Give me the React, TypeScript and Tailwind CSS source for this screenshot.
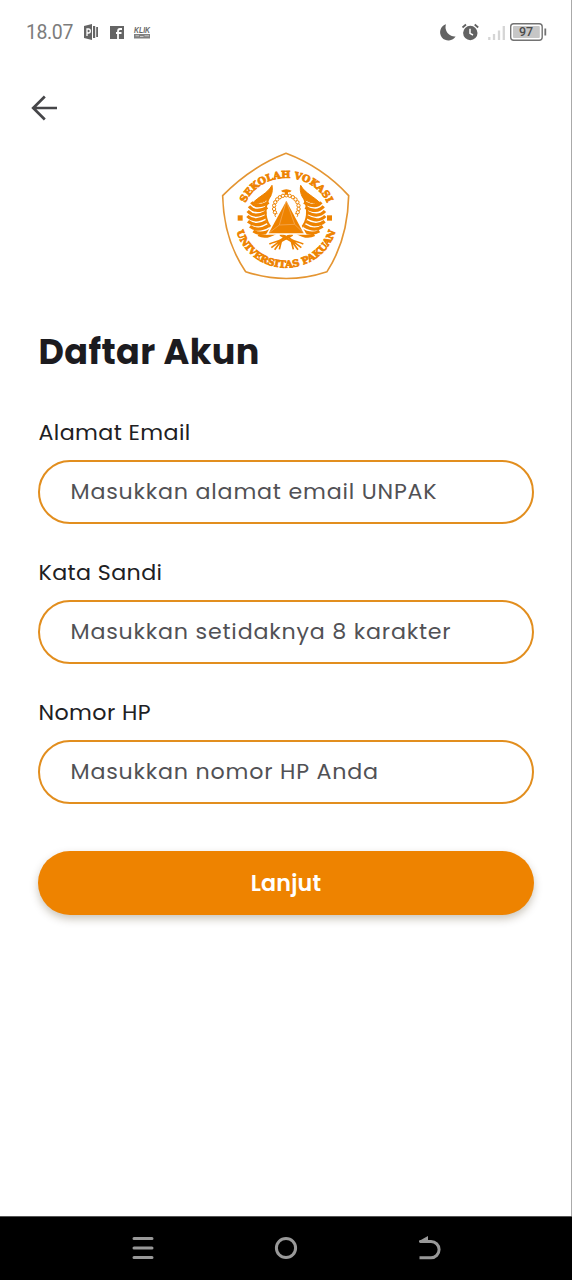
import React from "react";

const ORANGE = "#ee8300";

const FEATHERS = [
  "M124 172 Q140 192 176 172",
  "M117 184 Q136 207 172 187",
  "M113 198 Q134 221 168 201",
  "M112 213 Q134 235 167 215",
  "M114 229 Q138 249 170 229",
  "M120 244 Q144 262 176 242",
  "M130 258 Q154 273 186 253",
  "M145 269 Q168 281 198 262",
];

const BEADS = Array.from({ length: 17 }, (_, i) => {
  const angle = ((-218 + i * 16) * Math.PI) / 180;
  return { x: 229 + 37 * Math.cos(angle), y: 188 + 37 * Math.sin(angle) };
});

function Wing() {
  return (
    <g fill="none" stroke={ORANGE}>
      {FEATHERS.map((d) => (
        <path key={d} d={d} strokeWidth="9.5" />
      ))}
      <path d="M186 121 C172 146 146 154 126 176 C156 178 194 164 186 121Z" fill={ORANGE} strokeWidth="3" />
      <path d="M182 150 C163 178 162 218 178 241 C190 259 206 262 226 274 L234 282" strokeWidth="6" />
      <path d="M226 272 C214 290 202 287 178 297 M222 280 C206 291 198 297 184 308 M216 284 L194 314 M214 288 L208 313" strokeWidth="5" />
      <path d="M210 270 L246 290" strokeWidth="5" />
    </g>
  );
}

function Logo() {
  return (
    <svg viewBox="0 0 450 426" className="h-[142px] w-[150px]" role="img" aria-label="Sekolah Vokasi Universitas Pakuan">
      <defs>
        <path id="arc-top" d="M97 218 A132 119 0 0 1 361 218" />
        <path id="arc-bottom" d="M74 218 A154 150 0 0 0 382 218" />
      </defs>
      <path d="M228 25 Q337 66 416 152 Q413 284 351 380 Q228 421 107 380 Q41 284 38 152 Q122 66 228 25Z" fill="none" stroke="#e49532" strokeWidth="5" />
      <g fill={ORANGE} stroke={ORANGE} strokeWidth="2.4" className="font-['DejaVu_Serif',serif] text-[29px] font-bold">
        <text textAnchor="middle">
          <textPath href="#arc-top" startOffset="50%" textLength="304" lengthAdjust="spacingAndGlyphs">SEKOLAH VOKASI</textPath>
        </text>
        <text textAnchor="middle">
          <textPath href="#arc-bottom" startOffset="50%" textLength="394" lengthAdjust="spacingAndGlyphs">UNIVERSITAS PAKUAN</textPath>
        </text>
      </g>
      <rect x="83" y="211" width="15" height="16" fill={ORANGE} />
      <rect x="351" y="211" width="15" height="16" fill={ORANGE} />
      <Wing />
      <g transform="matrix(-1 0 0 1 458 0)">
        <Wing />
      </g>
      {BEADS.map((b, i) => (
        <circle key={i} cx={b.x} cy={b.y} r="5" fill="#fff" stroke={ORANGE} strokeWidth="3" />
      ))}
      <path d="M229 158 L290 269 H168Z" fill="#fff" />
      <path d="M229 168 L281 265 H176Z" fill={ORANGE} />
      <path d="M229 168 L208 240 L178 263 M208 240 L254 238 L280 263 M229 168 L254 238" fill="none" stroke="#f6b166" strokeWidth="2" />
      <path d="M213 137 Q229 128 245 137 L240 142 H234 V149 H224 V142 H218Z" fill={ORANGE} />
    </svg>
  );
}

function StatusBar() {
  return (
    <div className="flex h-16 shrink-0 items-center pr-6 pl-[26px] text-[#6b6b6b]">
      <span className="w-[48px] pt-px font-[Roboto,sans-serif] text-[19.5px] leading-none text-[#7c7c7c] tracking-[-0.4px]">18.07</span>
      <svg viewBox="0 0 72 20" className="ml-2 h-5 w-[72px]" fill="#656565">
        <path d="M2 4 L10 2 V18 L2 16Z M11 4 H13.2 V16 H11Z M14.2 5 H16 V15 H14.2Z" />
        <path d="M5 14 V7 H6.5 Q8.3 7 8.3 9 T6.5 11 H5" fill="none" stroke="#fff" strokeWidth="1.3" />
        <rect x="28" y="4" width="14" height="13" />
        <path d="M36 17 V9.5 Q36 7 38 7 H40 M34 11 H39.5" fill="none" stroke="#fff" strokeWidth="1.8" />
        <text x="52" y="10.5" textLength="16" lengthAdjust="spacingAndGlyphs" className="font-['Liberation_Sans',sans-serif] text-[8.5px] font-bold italic">KLIK</text>
        <path d="M52 12 H68 V16.5 H52Z" fill="#808080" />
        <path d="M53.5 13.8 H57 M58 14.5 H61.5 M62.5 13.8 H67" stroke="#ddd" strokeWidth="0.8" />
      </svg>
      <svg viewBox="0 0 110 24" className="ml-auto h-6 w-[110px]">
        <path d="M9 4.3 A8.3 8.3 0 1 0 18.6 16.4 A9.2 9.2 0 0 1 9 4.3Z" fill="#626262" />
        <circle cx="33.3" cy="13" r="7.2" fill="#626262" />
        <path d="M25.5 7.5 L29 4.5 M37.7 4.5 L41.2 7.5" stroke="#626262" strokeWidth="1.8" />
        <path d="M33 8.8 V13.4 L36 15" stroke="#fff" strokeWidth="1.5" fill="none" />
        <path d="M52.3 17 V20 M57 14 V20 M62 10.5 V20 M66.8 6 V20" stroke="#d5d5d5" strokeWidth="2.3" />
        <rect x="73.7" y="3.7" width="31.5" height="16.6" rx="3" fill="#fff" stroke="#737373" strokeWidth="1.4" />
        <rect x="76" y="6" width="26.8" height="12" rx="1" fill="#c6c6c6" />
        <path d="M108.3 8.5 V15.5" stroke="#737373" strokeWidth="1.8" />
        <text x="89" y="16.4" textAnchor="middle" fill="#4c4c4c" className="font-[Roboto,sans-serif] text-[12.5px] font-medium">97</text>
      </svg>
    </div>
  );
}

function Field({ label, hint }: { label: string; hint: string }) {
  return (
    <label className="flex h-[140px] flex-col">
      <span className="h-[44px] pt-px pl-[0.5px] text-[22.2px] leading-[31px] tracking-[0.4px] whitespace-nowrap text-[#202023]">{label}</span>
      <span className="flex h-16 items-center rounded-full border-2 border-[#e28e1e] pl-[30.5px] whitespace-nowrap">
        <span className="text-[22.2px] leading-8 tracking-[0.8px] text-[#515155]">{hint}</span>
      </span>
    </label>
  );
}

export default function App() {
  return (
    <div className="flex h-[1280px] w-[572px] flex-col bg-white font-[Poppins,Inter,sans-serif]">
      <div className="flex h-[1216px] flex-col border-r border-[#aaa]">
        <StatusBar />
        <div className="h-[81px] pt-[30px] pl-[30px]">
          <svg viewBox="0 0 28 28" className="size-7" fill="none" stroke="#464649" strokeWidth="2.7">
            <path d="M14.8 2.5 L3.2 14 L14.8 25.5 M3.2 14 H27" />
          </svg>
        </div>
        <div className="pl-[210px]">
          <Logo />
        </div>
        <main className="flex flex-col pt-[40px] pr-[37px] pl-[38px]">
          <h1 className="h-[89px] pt-px pl-[0.5px] text-[35px] leading-[47px] font-bold tracking-[0.4px] whitespace-nowrap text-[#1c1b1f]">Daftar Akun</h1>
          <Field label="Alamat Email" hint="Masukkan alamat email UNPAK" />
          <Field label="Kata Sandi" hint="Masukkan setidaknya 8 karakter" />
          <Field label="Nomor HP" hint="Masukkan nomor HP Anda" />
          <button className="mt-[15px] h-16 w-[496px] rounded-full bg-[#ee8300] pt-0.5 text-[22.2px] font-semibold tracking-[0.2px] text-white shadow-[0_4px_8px_rgba(60,40,0,0.27)]">Lanjut</button>
        </main>
      </div>
      <nav className="h-16 border-t border-[#555] bg-black">
        <svg viewBox="0 0 572 63" className="h-[63px] w-[572px]" fill="none" stroke="#999" strokeWidth="3">
          <path d="M134 21.5 H152 M134 31 H152 M134 40.5 H152" strokeLinecap="round" />
          <circle cx="286" cy="31" r="9.6" />
          <path d="M419.5 24.5 H431 A8 8 0 0 1 431 40.7 H419.5" />
          <path d="M419 24 L428 19 V25 H419Z" fill="#999" stroke="none" />
        </svg>
      </nav>
    </div>
  );
}
